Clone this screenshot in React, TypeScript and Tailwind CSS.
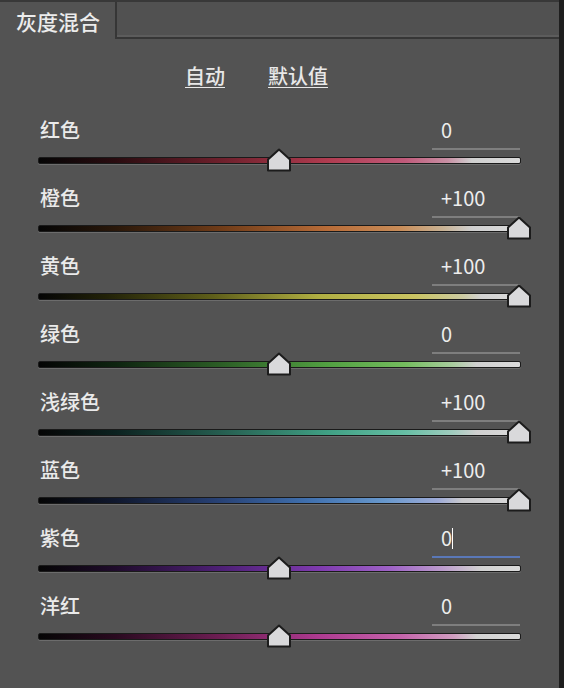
import type { CSSProperties } from "react";

type Channel = {
  label: string;
  value: number;
  gradient: string;
  editing?: boolean;
};

const channels: Channel[] = [
  {
    label: "红色",
    value: 0,
    gradient:
      "linear-gradient(to right,#050505 0%,#2a0c10 16%,#6e202c 38%,#b03c50 60%,#c05a7a 76%,#c890a4 85%,#d0d0d0 90%,#dadada 100%)",
  },
  {
    label: "橙色",
    value: 100,
    gradient:
      "linear-gradient(to right,#050505 0%,#2a180a 16%,#703c18 38%,#b86c38 60%,#c88c58 75%,#c8b294 84%,#cfcfcf 90%,#dadada 100%)",
  },
  {
    label: "黄色",
    value: 100,
    gradient:
      "linear-gradient(to right,#050505 0%,#222208 14%,#5e5e1a 36%,#b0ae42 58%,#cac462 78%,#cccaa0 88%,#d2d2d2 92%,#dadada 100%)",
  },
  {
    label: "绿色",
    value: 0,
    gradient:
      "linear-gradient(to right,#050505 0%,#0e2410 16%,#2c5e26 38%,#52a042 60%,#74bc5e 76%,#a8cc9e 86%,#d0d0d0 91%,#dadada 100%)",
  },
  {
    label: "浅绿色",
    value: 100,
    gradient:
      "linear-gradient(to right,#050505 0%,#0c2220 16%,#265e50 38%,#40a084 60%,#66bea4 76%,#a0ccbe 86%,#d0d0d0 91%,#dadada 100%)",
  },
  {
    label: "蓝色",
    value: 100,
    gradient:
      "linear-gradient(to right,#050505 0%,#10182e 16%,#263e70 36%,#4070ae 56%,#6898cc 72%,#9eaad6 83%,#cacace 88%,#dadada 100%)",
  },
  {
    label: "紫色",
    value: 0,
    editing: true,
    gradient:
      "linear-gradient(to right,#050505 0%,#200c2c 16%,#4e2076 38%,#7e3aae 58%,#9e62c6 73%,#bc9ccc 84%,#d2d2d2 92%,#dadada 100%)",
  },
  {
    label: "洋红",
    value: 0,
    gradient:
      "linear-gradient(to right,#050505 0%,#2a0a20 16%,#6e1e54 38%,#ae3a90 58%,#c462aa 75%,#d09cc0 86%,#d2d2d2 91%,#dadada 100%)",
  },
];

function Thumb({ value }: { value: number }) {
  // range -100..100 maps onto 0..480px of the track
  const style: CSSProperties = { left: ((value + 100) / 200) * 480 - 13 };
  return (
    <svg
      className="absolute top-[-10px]"
      style={style}
      width="26"
      height="24"
      viewBox="0 0 26 24"
    >
      <polygon
        points="13,1.5 24,11.5 24,22.5 2,22.5 2,11.5"
        fill="#d9d9db"
        stroke="#1c1c1c"
        strokeWidth="2"
        strokeLinejoin="round"
      />
    </svg>
  );
}

function ChannelRow({ channel }: { channel: Channel }) {
  return (
    <div className="h-[68px]">
      <div className="flex items-start justify-between">
        <span className="pl-[2px] text-[20px] leading-[24px] font-medium text-[#eaeaea]">
          {channel.label}
        </span>
        <div
          className={
            channel.editing
              ? "mr-[1px] flex h-[32px] w-[88px] items-start border-b-2 border-[#5a78b8] pl-[9px]"
              : "mr-[1px] flex h-[32px] w-[88px] items-start border-b-2 border-[#7e7e7e] pl-[9px]"
          }
        >
          <span className="text-[20px] leading-[24px] text-[#ededed]">
            {channel.value > 0 ? `+${channel.value}` : channel.value}
          </span>
          {channel.editing && (
            <span className="mt-[2px] h-[21px] w-[1px] bg-white" />
          )}
        </div>
      </div>
      <div
        className="relative mt-[7px] h-[7px] rounded-[2px] border border-[#1a1a1a] shadow-[0_1px_0_#6c6c6c]"
        style={{ backgroundImage: channel.gradient }}
      >
        <Thumb value={channel.value} />
      </div>
    </div>
  );
}

export default function App() {
  return (
    <div
      className="flex h-[688px] w-[564px] flex-col overflow-hidden border-r-[5px] border-[#1e1e1e] bg-[#535353] text-[#e8e8e8]"
      style={{ fontFamily: '"Noto Sans CJK SC", "Noto Sans", sans-serif' }}
    >
      <div className="flex h-[39px] border-t-2 border-[#383838]">
        <div className="flex w-[115px] items-center pl-[16px] pt-[1px] text-[21px] leading-[24px] font-medium text-[#ececec]">
          灰度混合
        </div>
        <div className="flex-1 border-b-2 border-l-2 border-[#363636] bg-[#515151] shadow-[inset_0_-2px_0_#5c5c5c]" />
      </div>

      <div className="flex h-[79px] items-center gap-[43px] pl-[185px] pb-[6px] text-[20px] leading-[24px] font-medium">
        <span className="underline decoration-1 underline-offset-[3px]">
          自动
        </span>
        <span className="underline decoration-1 underline-offset-[3px]">
          默认值
        </span>
      </div>

      <div className="ml-[38px] w-[483px]">
        {channels.map((c) => (
          <ChannelRow key={c.label} channel={c} />
        ))}
      </div>
    </div>
  );
}
